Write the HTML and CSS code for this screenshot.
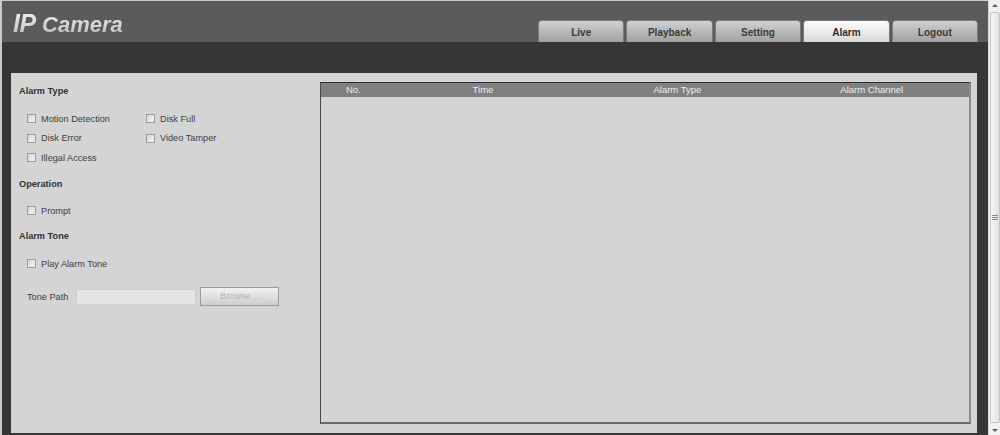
FILE: index.html
```html
<!DOCTYPE html>
<html>
<head>
<meta charset="utf-8">
<title>IP Camera - Alarm</title>
<link rel="stylesheet" href="styles.css">
</head>
<body>
<div class="app">
  <div class="frame">
    <header class="header">
      <div class="brand"><span class="brand-ip">IP</span> <span class="brand-cam">Camera</span></div>
      <nav class="tabs">
        <a class="tab">Live</a>
        <a class="tab">Playback</a>
        <a class="tab">Setting</a>
        <a class="tab tab-active">Alarm</a>
        <a class="tab">Logout</a>
      </nav>
    </header>
    <div class="band"></div>
    <main class="panel">
      <section class="options">
        <div class="heading h-first">Alarm Type</div>
        <div class="check-grid">
          <label class="check"><span class="box"></span>Motion Detection</label>
          <label class="check"><span class="box"></span>Disk Full</label>
          <label class="check"><span class="box"></span>Disk Error</label>
          <label class="check"><span class="box"></span>Video Tamper</label>
          <label class="check"><span class="box"></span>Illegal Access</label>
        </div>
        <div class="heading h-op">Operation</div>
        <label class="check single s-prompt"><span class="box"></span>Prompt</label>
        <div class="heading h-tone">Alarm Tone</div>
        <label class="check single s-play"><span class="box"></span>Play Alarm Tone</label>
        <div class="path-row">
          <span class="path-label">Tone Path</span>
          <span class="path-input"></span>
          <span class="browse">Browse...</span>
        </div>
      </section>
      <section class="log">
        <div class="log-head">
          <span class="col c-no">No.</span>
          <span class="col c-wide">Time</span>
          <span class="col c-wide">Alarm Type</span>
          <span class="col c-wide">Alarm Channel</span>
        </div>
        <div class="log-body"></div>
      </section>
    </main>
  </div>
  <div class="scrollbar">
    <div class="arrow arrow-up"></div>
    <div class="thumb"><span class="grip"></span></div>
    <div class="arrow arrow-down"></div>
  </div>
</div>
</body>
</html>
```

FILE: styles.css
```css
* { box-sizing: border-box; }

html, body {
  margin: 0;
  padding: 0;
  height: 435px;
  overflow: hidden;
  background: #e6e6e6;
  font-family: "Liberation Sans", Arial, sans-serif;
}

.app {
  display: flex;
  height: 435px;
}

.frame {
  flex: 1;
  display: flex;
  flex-direction: column;
  border-top: 1px solid #c9c9c9;
  border-left: 2px solid #c9c9c9;
  background: #363636;
  padding-bottom: 2px;
}

/* top bar with logo and navigation tabs */
.header {
  height: 41px;
  background: #5b5b5b;
  display: flex;
  justify-content: space-between;
  align-items: flex-end;
  padding: 0 10px 0 11px;
}

.brand {
  align-self: flex-start;
  margin-top: 8px;
  font-weight: bold;
  font-style: italic;
  background: linear-gradient(#f6f6f6, #cfcfcf 60%, #a8a8a8);
  -webkit-background-clip: text;
  background-clip: text;
  color: transparent;
  white-space: nowrap;
  line-height: 28px;
}

.brand-ip { font-size: 25px; letter-spacing: -0.5px; }
.brand-cam { font-size: 22px; letter-spacing: 0; margin-left: 2px; }

.tabs {
  display: flex;
  gap: 2px;
}

.tab {
  width: 86.4px;
  height: 22px;
  border: 1px solid #7a7a7a;
  border-bottom: none;
  border-radius: 4px 4px 0 0;
  background: linear-gradient(#d2d2d2, #b8b8b8 50%, #a2a2a2);
  color: #3a3a3a;
  font-weight: bold;
  font-size: 10px;
  text-align: center;
  line-height: 22px;
  padding-top: 1px;
}

.tab-active {
  background: linear-gradient(#fcfcfc, #ececec 50%, #d6d6d6);
  color: #2e2e2e;
}

.band {
  height: 31px;
  background: #363636;
}

/* main content area */
.panel {
  flex: 1;
  display: flex;
  margin: 0 11px 0 9px;
  background: #d4d4d4;
  padding: 9px 6px 9px 0;
}

.options {
  width: 309px;
  padding-left: 8px;
  color: #3a3a3a;
  font-size: 9.2px;
}

.heading {
  font-weight: bold;
  line-height: 20px;
  height: 20px;
  color: #333;
}

.h-first { margin-top: -1px; }
.h-op { margin-top: 6px; }
.h-tone { margin-top: 5px; }

.check-grid {
  display: grid;
  grid-template-columns: 119px 1fr;
  grid-auto-rows: 19.5px;
  margin-top: 8px;
  padding-left: 8px;
}

.check {
  display: flex;
  align-items: center;
  line-height: 20px;
  color: #404040;
  white-space: nowrap;
}

.single {
  padding-left: 8px;
  height: 20px;
}

.s-prompt { margin-top: 7px; }
.s-play { margin-top: 8px; }

.box {
  width: 9px;
  height: 9px;
  border: 1px solid #9a9a9a;
  background: linear-gradient(135deg, #d8d8d8, #f4f4f4);
  margin-right: 5px;
  flex: none;
}

.path-row {
  display: flex;
  align-items: center;
  height: 20px;
  margin-top: 13px;
  padding-left: 8px;
  color: #404040;
}

.path-label { width: 49px; }

.path-input {
  width: 120px;
  height: 16px;
  background: #e4e4e4;
  border: 1px solid #cfcfcf;
}

.browse {
  margin-left: 4px;
  width: 79px;
  height: 19px;
  border: 1px solid #9c9c9c;
  background: linear-gradient(#f2f2f2, #dcdcdc 60%, #cdcdcd);
  color: #b4b4b4;
  text-align: center;
  line-height: 17px;
}

/* alarm log table */
.log {
  flex: 1;
  display: flex;
  flex-direction: column;
  border-top: 1px solid #2e2e2e;
  border-left: 1px solid #4a4a4a;
  border-right: 2px solid #8a8a8a;
  border-bottom: 2px solid #6a6a6a;
}

.log-head {
  display: flex;
  height: 14px;
  background: #808080;
  color: #efefef;
  font-size: 9.5px;
  line-height: 14px;
}

.col { text-align: center; }
.c-no { width: 10%; }
.c-wide { width: 30%; }

.log-body {
  flex: 1;
  background: #d4d4d4;
}

/* page scrollbar */
.scrollbar {
  width: 12px;
  display: flex;
  flex-direction: column;
  align-items: center;
  background: #f1f1f1;
  border-left: 1px solid #d6d6d6;
}

.arrow {
  height: 10px;
  width: 100%;
  position: relative;
}

.arrow::after {
  content: "";
  position: absolute;
  left: 3px;
  top: 4px;
  border-left: 3px solid transparent;
  border-right: 3px solid transparent;
}

.arrow-up::after { border-bottom: 3px solid #606060; }
.arrow-down::after { border-top: 3px solid #606060; }

.thumb {
  flex: 1;
  width: 10px;
  margin: 2px 0;
  border: 1px solid #c4c4c4;
  border-radius: 2px;
  background: linear-gradient(90deg, #f6f6f6, #e2e2e2);
  display: flex;
  align-items: center;
  justify-content: center;
}

.grip {
  width: 6px;
  height: 6px;
  background: repeating-linear-gradient(#8a8a8a 0 1px, transparent 1px 2px);
}
```
